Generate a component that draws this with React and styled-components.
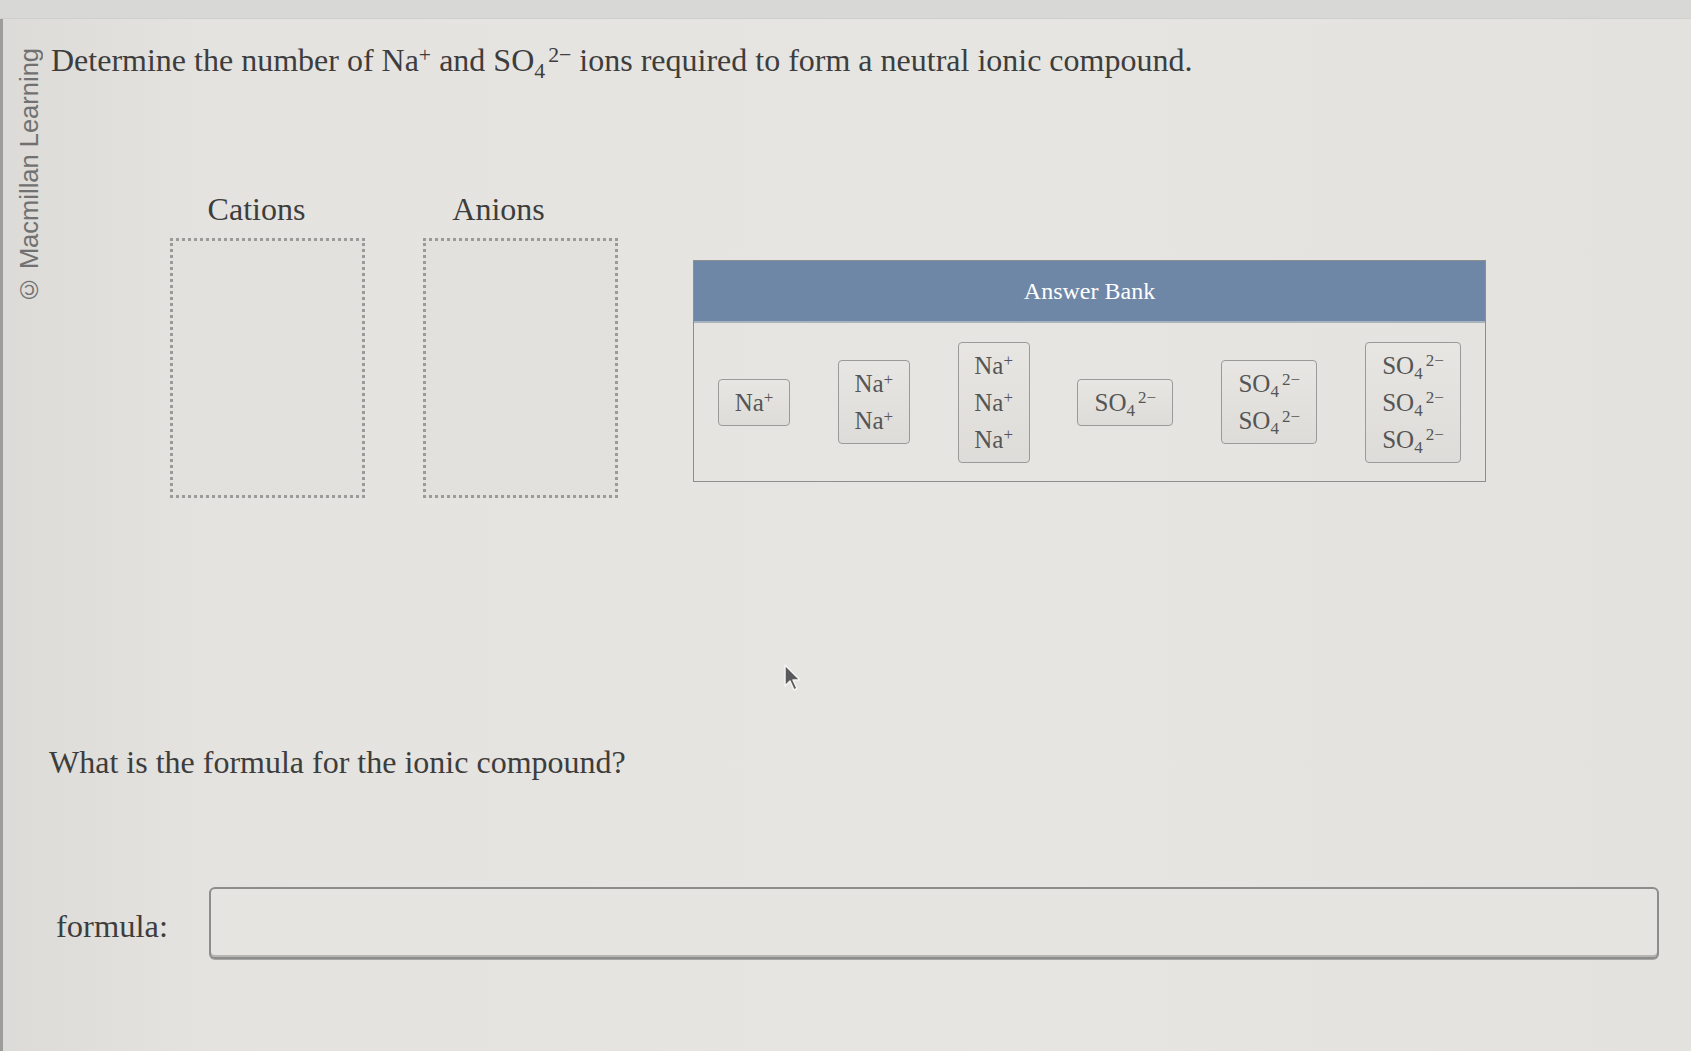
import React from 'react';
import styled, { createGlobalStyle } from 'styled-components';

const GlobalStyle = createGlobalStyle`
  html, body { margin: 0; padding: 0; }
  body { background: #e3e2de; font-family: 'Liberation Serif', 'Times New Roman', serif; color: #3c3c3c; }
`;

const TopStrip  = styled.div`height: 18px; background: #d8d8d6; border-bottom: 1px solid #cfcfcc;`;
const Screen    = styled.div`position: relative; display: flex; min-height: 1032px; border-left: 3px solid #9c9c9a; background: linear-gradient(90deg, #dcdbd7 0%, #e4e3df 12%, #e6e5e1 60%, #e3e2de 100%);`;
const Credit    = styled.div`width: 36px; padding: 29px 0 0 12px; flex-shrink: 0;`;
const CreditText = styled.div`writing-mode: vertical-rl; transform: rotate(180deg); font-family: 'Liberation Sans', Arial, sans-serif; font-size: 25.5px; line-height: 28px; color: #717171; white-space: nowrap;`;
const Content   = styled.div`flex: 1; padding: 23px 32px 0 0;`;
const Heading   = styled.div`font-size: 32px; line-height: 36px; color: #3d3d3d;`;
const Sup       = styled.sup`font-size: 0.68em; position: relative; top: -0.42em; vertical-align: baseline; line-height: 0; margin-left: ${p => p.$gap || 0}px;`;
const Sub       = styled.sub`font-size: 0.68em; position: relative; top: 0.3em; vertical-align: baseline; line-height: 0;`;

const Workspace = styled.div`display: flex; align-items: flex-start; margin: 113px 0 0 119px;`;
const DropGroup = styled.div`display: flex; flex-direction: column; margin-right: ${p => p.$gap}px;`;
const DropLabel = styled.div`font-size: 32px; line-height: 36px; text-align: center; padding-right: ${p => p.$shift}px; color: #3d3d3d; margin-bottom: 11px;`;
const DropZone  = styled.div`width: 189px; height: 254px; border: 3px dotted #9a9a98; background: #e2e1dd;`;

const Bank       = styled.div`width: 793px; margin-top: 69px; border: 1.5px solid #8e8e8e; box-sizing: border-box;`;
const BankHeader = styled.div`height: 60px; background: #6f87a6; color: #fff; font-size: 24px; display: flex; align-items: center; justify-content: center;`;
const BankBody   = styled.div`height: 160px; display: flex; align-items: center; justify-content: space-between; padding: 0 24px; border-top: 2px solid #a9b3bf; box-sizing: border-box;`;
const Tile       = styled.div`min-width: ${p => p.$wide ? 96 : 72}px; box-sizing: border-box; padding: 4px 12px; border: 1.5px solid #9a9a9a; border-radius: 4px; background: linear-gradient(180deg, #e7e6e2 0%, #dddcd8 100%); display: flex; flex-direction: column; align-items: center; font-size: 25px; line-height: 37px; color: #555;`;

const Question  = styled.div`font-size: 32px; line-height: 36px; color: #3d3d3d; margin: 246px 0 0 -2px;`;
const FormulaRow = styled.div`display: flex; align-items: center; margin-top: 107px;`;
const FormulaLabel = styled.div`font-size: 32.5px; line-height: 36px; color: #3d3d3d; width: 158px; padding-left: 5px; box-sizing: border-box; position: relative; top: 3px;`;
const FormulaInput = styled.div`flex: 1; height: 72px; box-sizing: border-box; border: 2px solid #8d8d8d; border-radius: 6px; box-shadow: inset 0 -2px 0 #b5b5b3, 0 1px 0 #a5a5a3; background: #e5e4e0;`;
const Pointer   = styled.svg`position: absolute; left: 779px; top: 644px;`;

const Na = () => <span>Na<Sup>+</Sup></span>;
const SO4 = () => <span>SO<Sub>4</Sub><Sup $gap={3}>2−</Sup></span>;

const tiles = [
  { ion: 'na', n: 1 }, { ion: 'na', n: 2 }, { ion: 'na', n: 3 },
  { ion: 'so', n: 1 }, { ion: 'so', n: 2 }, { ion: 'so', n: 3 },
];

export default function App() {
  return (
    <>
      <GlobalStyle />
      <TopStrip />
      <Screen>
        <Credit><CreditText>© Macmillan Learning</CreditText></Credit>
        <Content>
          <Heading>
            Determine the number of <Na />&nbsp;and <SO4 />&nbsp;ions required to form a neutral ionic compound.
          </Heading>
          <Workspace>
            <DropGroup $gap={58}>
              <DropLabel $shift={22}>Cations</DropLabel>
              <DropZone />
            </DropGroup>
            <DropGroup $gap={75}>
              <DropLabel $shift={44}>Anions</DropLabel>
              <DropZone />
            </DropGroup>
            <Bank>
              <BankHeader>Answer Bank</BankHeader>
              <BankBody>
                {tiles.map((t, i) => (
                  <Tile key={i} $wide={t.ion === 'so'}>
                    {Array.from({ length: t.n }).map((_, j) =>
                      t.ion === 'na' ? <Na key={j} /> : <SO4 key={j} />
                    )}
                  </Tile>
                ))}
              </BankBody>
            </Bank>
          </Workspace>
          <Question>What is the formula for the ionic compound?</Question>
          <FormulaRow>
            <FormulaLabel>formula:</FormulaLabel>
            <FormulaInput />
          </FormulaRow>
        </Content>
        <Pointer width="20" height="30" viewBox="0 0 20 30">
          <path d="M3 2 L3 23 L8 18 L12 27 L15 25.5 L11 17 L18 17 Z" fill="#5a5a5c" stroke="#f4f4f2" strokeWidth="1.5" strokeLinejoin="round" />
        </Pointer>
      </Screen>
    </>
  );
}
